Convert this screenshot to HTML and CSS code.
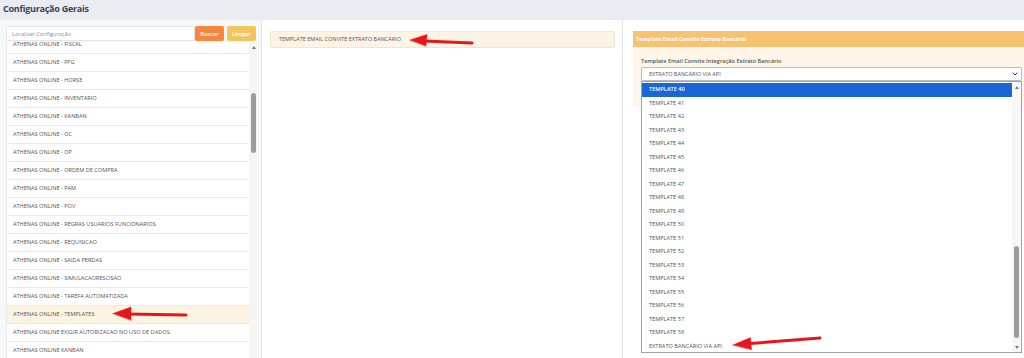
FILE: index.html
```html
<!DOCTYPE html>
<html lang="pt-BR">

<head>
    <meta charset="UTF-8">
    <meta name="viewport" content="width=device-width, initial-scale=1.0">
    <title>Configuração Gerais</title>
    <link rel="stylesheet" href="styles.css">
</head>

<body>

    <h2 class="page-title">Configuração Gerais</h2>

    <div class="main">
        <!-- Lista de configuracoes -->
        <div class="col-left">
            <div class="search-row">
                <input class="search-input" type="text" placeholder="Localizar Configuração">
                <button class="btn btn-buscar">Buscar</button>
                <button class="btn btn-limpar">Limpar</button>
            </div>
            <div class="list-wrap">
                <div class="list-scroll">
                    <ul class="config-list">
                        <li>ATHENAS ONLINE - FISCAL</li>
                        <li>ATHENAS ONLINE - FPG</li>
                        <li>ATHENAS ONLINE - HORSE</li>
                        <li>ATHENAS ONLINE - INVENTARIO</li>
                        <li>ATHENAS ONLINE - KANBAN</li>
                        <li>ATHENAS ONLINE - OC</li>
                        <li>ATHENAS ONLINE - OP</li>
                        <li>ATHENAS ONLINE - ORDEM DE COMPRA</li>
                        <li>ATHENAS ONLINE - PAM</li>
                        <li>ATHENAS ONLINE - POV</li>
                        <li>ATHENAS ONLINE - REGRAS USUARIOS FUNCIONARIOS</li>
                        <li>ATHENAS ONLINE - REQUISICAO</li>
                        <li>ATHENAS ONLINE - SAIDA PERDAS</li>
                        <li>ATHENAS ONLINE - SIMULACAORESCISAO</li>
                        <li>ATHENAS ONLINE - TAREFA AUTOMATIZADA</li>
                        <li class="active">ATHENAS ONLINE - TEMPLATES</li>
                        <li>ATHENAS ONLINE EXIGIR AUTORIZACAO NO USO DE DADOS</li>
                        <li>ATHENAS ONLINE KANBAN</li>
                    </ul>
                </div>
                <div class="scrollbar">
                    <span class="sb-up"></span>
                    <span class="sb-thumb"></span>
                </div>
            </div>
        </div>

        <!-- Itens da configuracao -->
        <div class="col-mid">
            <div class="item-box">TEMPLATE EMAIL CONVITE EXTRATO BANCÁRIO</div>
        </div>

        <!-- Edicao -->
        <div class="col-right">
            <div class="card">
                <div class="card-header">Template Email Convite Extrato Bancário</div>
                <div class="card-body">
                    <label class="field-label">Template Email Convite Integração Extrato Bancário</label>
                    <div class="select">
                        <span>EXTRATO BANCÁRIO VIA API</span>
                        <svg class="chevron" width="6" height="4" viewBox="0 0 6 4">
                            <path d="M0.6 0.6 L3 3 L5.4 0.6" fill="none" stroke="#444" stroke-width="1" />
                        </svg>
                    </div>
                    <div class="dropdown">
                        <ul class="options">
                            <li class="selected">TEMPLATE 40</li>
                            <li>TEMPLATE 41</li>
                            <li>TEMPLATE 42</li>
                            <li>TEMPLATE 43</li>
                            <li>TEMPLATE 44</li>
                            <li>TEMPLATE 45</li>
                            <li>TEMPLATE 46</li>
                            <li>TEMPLATE 47</li>
                            <li>TEMPLATE 48</li>
                            <li>TEMPLATE 49</li>
                            <li>TEMPLATE 50</li>
                            <li>TEMPLATE 51</li>
                            <li>TEMPLATE 52</li>
                            <li>TEMPLATE 53</li>
                            <li>TEMPLATE 54</li>
                            <li>TEMPLATE 55</li>
                            <li>TEMPLATE 56</li>
                            <li>TEMPLATE 57</li>
                            <li>TEMPLATE 58</li>
                            <li>EXTRATO BANCÁRIO VIA API</li>
                        </ul>
                        <div class="dd-scrollbar">
                            <span class="sb-up"></span>
                            <span class="dd-thumb"></span>
                            <span class="sb-down"></span>
                        </div>
                    </div>
                </div>
            </div>
        </div>
    </div>

    <!-- setas de destaque -->
    <svg class="arrows" width="1024" height="358" viewBox="0 0 1024 358">
        <g fill="#e5161c" stroke="#e5161c" stroke-linecap="round">
            <line x1="424" y1="41" x2="472" y2="43" stroke-width="3" />
            <polygon points="410,40 427,34.5 426,46" stroke-width="0.5" />

            <line x1="127" y1="314" x2="186" y2="315" stroke-width="3" />
            <polygon points="113,313.5 131,307 131,320" stroke-width="0.5" />

            <line x1="747" y1="343.8" x2="820" y2="338" stroke-width="3" />
            <polygon points="733,345 750.5,337.6 751.5,349.6" stroke-width="0.5" />
        </g>
    </svg>

</body>

</html>
```

FILE: styles.css
```css
body {
    margin: 0;
    width: 1024px;
    height: 358px;
    overflow: hidden;
    position: relative;
    font-family: 'Open Sans', sans-serif;
    background: #f3f4f7;
    color: #555;
}

.page-title {
    margin: 0;
    height: 20px;
    line-height: 17px;
    padding-left: 3px;
    font-size: 9px;
    font-weight: 700;
    letter-spacing: -0.25px;
    color: #3c4552;
    background: #e9ecf1;
}

.main {
    display: flex;
    height: 338px;
}

/* Coluna esquerda */
.col-left {
    width: 262px;
    box-sizing: border-box;
    padding: 6px 0 0 6px;
    background: #f6f7f9;
    border-right: 1px solid #e0e3e7;
}

.search-row {
    display: flex;
    height: 15px;
}

.search-input {
    width: 189px;
    height: 15px;
    box-sizing: border-box;
    border: 1px solid #e1e4e8;
    border-radius: 2px 0 0 2px;
    padding: 0 5px;
    font-family: inherit;
    font-size: 5.6px;
    color: #555;
    outline: none;
}

.search-input::placeholder {
    color: #8a8f96;
}

.btn {
    width: 29px;
    height: 15px;
    padding: 0;
    border: none;
    border-radius: 2px;
    color: white;
    font-family: inherit;
    font-size: 5.6px;
    font-weight: 600;
}

.btn-buscar {
    background: #f7873c;
}

.btn-limpar {
    margin-left: 3px;
    background: #efc75e;
}

.list-wrap {
    display: flex;
    margin-top: 1px;
    height: 316px;
}

.list-scroll {
    width: 242px;
    overflow: hidden;
    border-left: 1px solid #e8eaed;
}

.config-list {
    margin: -6px 0 0 0;
    padding: 0;
    list-style: none;
}

.config-list li {
    height: 17px;
    line-height: 17px;
    padding-left: 6px;
    border-bottom: 1px solid #e6e8eb;
    background: white;
    font-size: 5.6px;
    color: #555;
    white-space: nowrap;
}

.config-list li.active {
    background: #fdf3e3;
}

.scrollbar {
    width: 9px;
    display: flex;
    flex-direction: column;
    align-items: center;
    background: #f5f5f5;
}

.sb-up,
.sb-down {
    width: 0;
    height: 0;
    border-left: 2.5px solid transparent;
    border-right: 2.5px solid transparent;
}

.sb-up {
    margin-top: 4px;
    border-bottom: 3px solid #777;
}

.sb-down {
    border-top: 3px solid #777;
}

.sb-thumb {
    margin-top: 44px;
    width: 5px;
    height: 60px;
    border-radius: 3px;
    background: #9c9c9c;
}

/* Coluna do meio */
.col-mid {
    width: 361px;
    box-sizing: border-box;
    padding: 11px 7px 0 8px;
    background: white;
    border-right: 1px solid #e0e3e7;
}

.item-box {
    height: 17px;
    box-sizing: border-box;
    padding-left: 8px;
    line-height: 15px;
    border: 1px solid #f0e5d3;
    border-radius: 2px;
    background: #fdf4e5;
    font-size: 5.5px;
    color: #555;
}

/* Coluna direita */
.col-right {
    flex: 1;
    padding: 11px 0 0 10px;
    background: white;
}

.card-header {
    height: 16px;
    line-height: 16px;
    padding-left: 3px;
    background: #f7c373;
    color: white;
    font-size: 5.4px;
    font-weight: 700;
}

.card-body {
    position: relative;
    height: 59px;
    box-sizing: border-box;
    padding: 11px 2px 0 8px;
    background: #fdf6e9;
}

.field-label {
    display: block;
    height: 7px;
    line-height: 7px;
    font-size: 5.6px;
    font-weight: 600;
    color: #555;
}

.select {
    display: flex;
    justify-content: space-between;
    align-items: center;
    height: 14px;
    margin-top: 2px;
    box-sizing: border-box;
    padding: 0 3px 0 7px;
    border: 1px solid #b7bec8;
    border-radius: 2px;
    background: white;
    font-size: 5.5px;
    color: #555;
}

.chevron {
    display: block;
}

.dropdown {
    position: absolute;
    top: 34px;
    left: 8px;
    right: 2px;
    height: 272px;
    box-sizing: border-box;
    display: flex;
    border: 1px solid #a3a3a3;
    background: white;
}

.options {
    flex: 1;
    margin: 0;
    padding: 1px 0 0 0;
    list-style: none;
}

.options li {
    height: 13.5px;
    line-height: 13.5px;
    padding-left: 7px;
    font-size: 5.6px;
    color: #555;
}

.options li.selected {
    background: #1967d2;
    color: white;
    font-weight: 600;
}

.dd-scrollbar {
    width: 9px;
    display: flex;
    flex-direction: column;
    align-items: center;
    background: #f7f7f7;
}

.dd-thumb {
    margin-top: 157px;
    width: 5px;
    height: 92px;
    border-radius: 3px;
    background: #9c9c9c;
}

.dd-scrollbar .sb-down {
    margin-top: auto;
    margin-bottom: 3px;
}

.arrows {
    position: absolute;
    top: 0;
    left: 0;
    pointer-events: none;
}
```
